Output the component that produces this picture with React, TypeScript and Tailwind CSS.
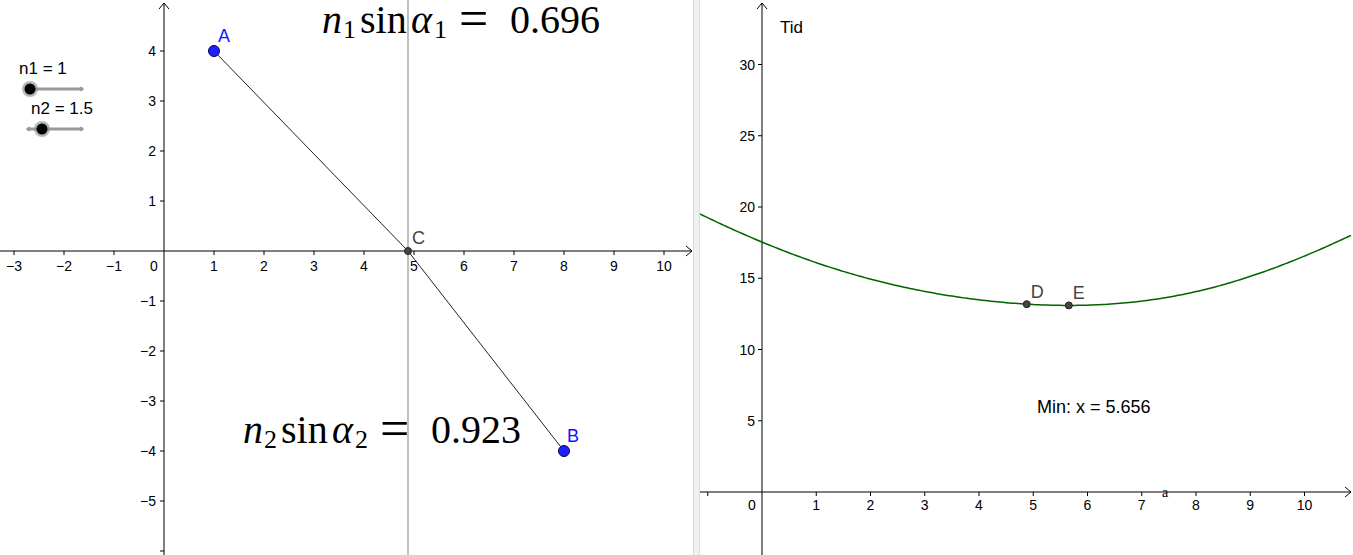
import React from 'react';

const SANS = '"Liberation Sans", Arial, sans-serif';
const SERIF = '"Liberation Serif", "DejaVu Serif", serif';

// scene values
const A = { x: 1, y: 4 };
const B = { x: 8, y: -4 };
const N1 = 1;
const N2 = 1.5;
const CX = 4.88;
const MIN_X = 5.656;

const tid = (a: number) =>
  N1 * Math.hypot(a - A.x, A.y) + N2 * Math.hypot(B.x - a, B.y);

// left view: origin + scale
const L = { ox: 164, oy: 251, s: 50 };
const lx = (x: number) => L.ox + x * L.s;
const ly = (y: number) => L.oy - y * L.s;

// right view (coords local to its svg)
const R = { ox: 62, oy: 492, sx: 54.25, sy: 14.25 };
const rx = (x: number) => R.ox + x * R.sx;
const ry = (y: number) => R.oy - y * R.sy;

function Formula({ x, y, sub, value }: { x: number; y: number; sub: string; value: string }) {
  return (
    <text y={y} fontFamily={SERIF} fontSize={40} fill="#000">
      <tspan x={x} fontStyle="italic">n</tspan>
      <tspan x={x + 21} y={y + 5} fontSize={26}>{sub}</tspan>
      <tspan x={x + 38} y={y}>sin</tspan>
      <tspan x={x + 89} fontStyle="italic">α</tspan>
      <tspan x={x + 112} y={y + 5} fontSize={26}>{sub}</tspan>
      <tspan x={x + 137} y={y + 3} fontSize={52}>=</tspan>
      <tspan x={x + 188} y={y}>{value}</tspan>
    </text>
  );
}

function Slider({ label, lx0, ty, y, x1, x2, px }: { label: string; lx0: number; ty: number; y: number; x1: number; x2: number; px: number }) {
  return (
    <g>
      <text x={lx0} y={ty} fontFamily={SANS} fontSize={17} fill="#000">{label}</text>
      <line x1={x1} y1={y} x2={x2} y2={y} stroke="#999" strokeWidth={3} />
      <path d={`M${x2 - 3} ${y - 2}L${x2} ${y}L${x2 - 3} ${y + 2}`} stroke="#999" strokeWidth={1.5} fill="none" />
      <path d={`M${x1 + 3} ${y - 2}L${x1} ${y}L${x1 + 3} ${y + 2}`} stroke="#999" strokeWidth={1.5} fill="none" />
      <circle cx={px} cy={y} r={8} fill="#888" fillOpacity={0.6} />
      <circle cx={px} cy={y} r={5.5} fill="#000" />
    </g>
  );
}

function LeftView() {
  const xs = [-3, -2, -1, 1, 2, 3, 4, 5, 6, 7, 8, 9, 10];
  const ys = [-6, -5, -4, -3, -2, -1, 1, 2, 3, 4];
  const minus = (n: number) => (n < 0 ? `\u2212${-n}` : `${n}`);
  return (
    <svg width={693} height={555} className="block">
      {/* sliders */}
      <Slider label="n1 = 1" lx0={19} ty={74} y={89} x1={27} x2={83} px={30} />
      <Slider label="n2 = 1.5" lx0={31} ty={114} y={129} x1={27} x2={83} px={42} />

      {/* axes */}
      <line x1={0} y1={L.oy} x2={692} y2={L.oy} stroke="#000" strokeWidth={1} />
      <path d={`M686 ${L.oy - 5}L692 ${L.oy}L686 ${L.oy + 5}`} stroke="#000" fill="none" />
      <line x1={L.ox} y1={555} x2={L.ox} y2={3} stroke="#000" strokeWidth={1} />
      <path d={`M${L.ox - 5} 9L${L.ox} 3L${L.ox + 5} 9`} stroke="#000" fill="none" />
      {xs.map((k) => (
        <g key={`x${k}`}>
          <line x1={lx(k)} y1={L.oy} x2={lx(k)} y2={L.oy + 4} stroke="#000" />
          <text x={lx(k)} y={L.oy + 20} textAnchor="middle" fontFamily={SANS} fontSize={14}>{minus(k)}</text>
        </g>
      ))}
      <text x={L.ox - 10} y={L.oy + 20} textAnchor="middle" fontFamily={SANS} fontSize={14}>0</text>
      {ys.map((k) => (
        <g key={`y${k}`}>
          <line x1={L.ox - 4} y1={ly(k)} x2={L.ox} y2={ly(k)} stroke="#000" />
          {k > -6 && (
            <text x={L.ox - 8} y={ly(k) + 5} textAnchor="end" fontFamily={SANS} fontSize={14}>{minus(k)}</text>
          )}
        </g>
      ))}

      {/* interface line */}
      <line x1={lx(CX)} y1={0} x2={lx(CX)} y2={555} stroke="#bfbfbf" strokeWidth={2} />

      {/* ray A -> C -> B */}
      <polyline
        points={`${lx(A.x)},${ly(A.y)} ${lx(CX)},${L.oy} ${lx(B.x)},${ly(B.y)}`}
        fill="none"
        stroke="#222"
        strokeWidth={1}
      />

      <Formula x={322} y={33} sub="1" value="0.696" />
      <Formula x={243} y={443} sub="2" value="0.923" />

      {/* points */}
      <circle cx={lx(A.x)} cy={ly(A.y)} r={5.5} fill="#1f1fff" stroke="#000060" strokeWidth={1} />
      <text x={lx(A.x) + 4} y={ly(A.y) - 9} fontFamily={SANS} fontSize={18} fill="#1414ff">A</text>
      <circle cx={lx(B.x)} cy={ly(B.y)} r={5.5} fill="#1f1fff" stroke="#000060" strokeWidth={1} />
      <text x={lx(B.x) + 3} y={ly(B.y) - 9} fontFamily={SANS} fontSize={18} fill="#1414ff">B</text>
      <circle cx={lx(CX)} cy={L.oy} r={3.5} fill="#444" stroke="#222" strokeWidth={1} />
      <text x={lx(CX) + 4} y={L.oy - 7} fontFamily={SANS} fontSize={18} fill="#444">C</text>
    </svg>
  );
}

function RightView() {
  const xs = [-1, 1, 2, 3, 4, 5, 6, 7, 8, 9, 10];
  const ys = [5, 10, 15, 20, 25, 30];
  const pts: string[] = [];
  for (let px = 0; px <= 653; px += 3) {
    const a = (px - R.ox) / R.sx;
    pts.push(`${px},${ry(tid(a)).toFixed(2)}`);
  }
  const dY = ry(tid(CX));
  const eY = ry(tid(MIN_X));
  return (
    <svg width={653} height={555} className="block">
      <line x1={0} y1={R.oy} x2={651} y2={R.oy} stroke="#000" />
      <path d={`M645 ${R.oy - 5}L651 ${R.oy}L645 ${R.oy + 5}`} stroke="#000" fill="none" />
      <line x1={R.ox} y1={555} x2={R.ox} y2={3} stroke="#000" />
      <path d={`M${R.ox - 5} 9L${R.ox} 3L${R.ox + 5} 9`} stroke="#000" fill="none" />
      {xs.map((k) => (
        <g key={`x${k}`}>
          <line x1={rx(k)} y1={R.oy} x2={rx(k)} y2={R.oy + 4} stroke="#000" />
          {k > 0 && (
            <text x={rx(k)} y={R.oy + 18} textAnchor="middle" fontFamily={SANS} fontSize={14}>{k}</text>
          )}
        </g>
      ))}
      <text x={R.ox - 10} y={R.oy + 18} textAnchor="middle" fontFamily={SANS} fontSize={14}>0</text>
      {ys.map((k) => (
        <g key={`y${k}`}>
          <line x1={R.ox - 4} y1={ry(k)} x2={R.ox} y2={ry(k)} stroke="#000" />
          <text x={R.ox - 7} y={ry(k) + 5} textAnchor="end" fontFamily={SANS} fontSize={14}>{k}</text>
        </g>
      ))}
      <text x={80} y={33} fontFamily={SANS} fontSize={17}>Tid</text>
      <text x={462} y={497} fontFamily={SERIF} fontSize={14}>a</text>

      <polyline points={pts.join(' ')} fill="none" stroke="#006400" strokeWidth={1.5} />

      <circle cx={rx(CX)} cy={dY} r={3.5} fill="#444" stroke="#222" />
      <text x={rx(CX) + 4} y={dY - 6} fontFamily={SANS} fontSize={18} fill="#444">D</text>
      <circle cx={rx(MIN_X)} cy={eY} r={3.5} fill="#444" stroke="#222" />
      <text x={rx(MIN_X) + 4} y={eY - 6} fontFamily={SANS} fontSize={18} fill="#444">E</text>

      <text x={337} y={413} fontFamily={SANS} fontSize={18}>Min: x = 5.656</text>
    </svg>
  );
}

export default function App() {
  return (
    <div className="flex h-[555px] w-[1353px] overflow-hidden bg-white">
      <div className="w-[693px] shrink-0">
        <LeftView />
      </div>
      <div className="w-[7px] shrink-0 border-x border-[#dcdcdc] bg-[#f0f0f0]" />
      <div className="flex-1">
        <RightView />
      </div>
    </div>
  );
}
